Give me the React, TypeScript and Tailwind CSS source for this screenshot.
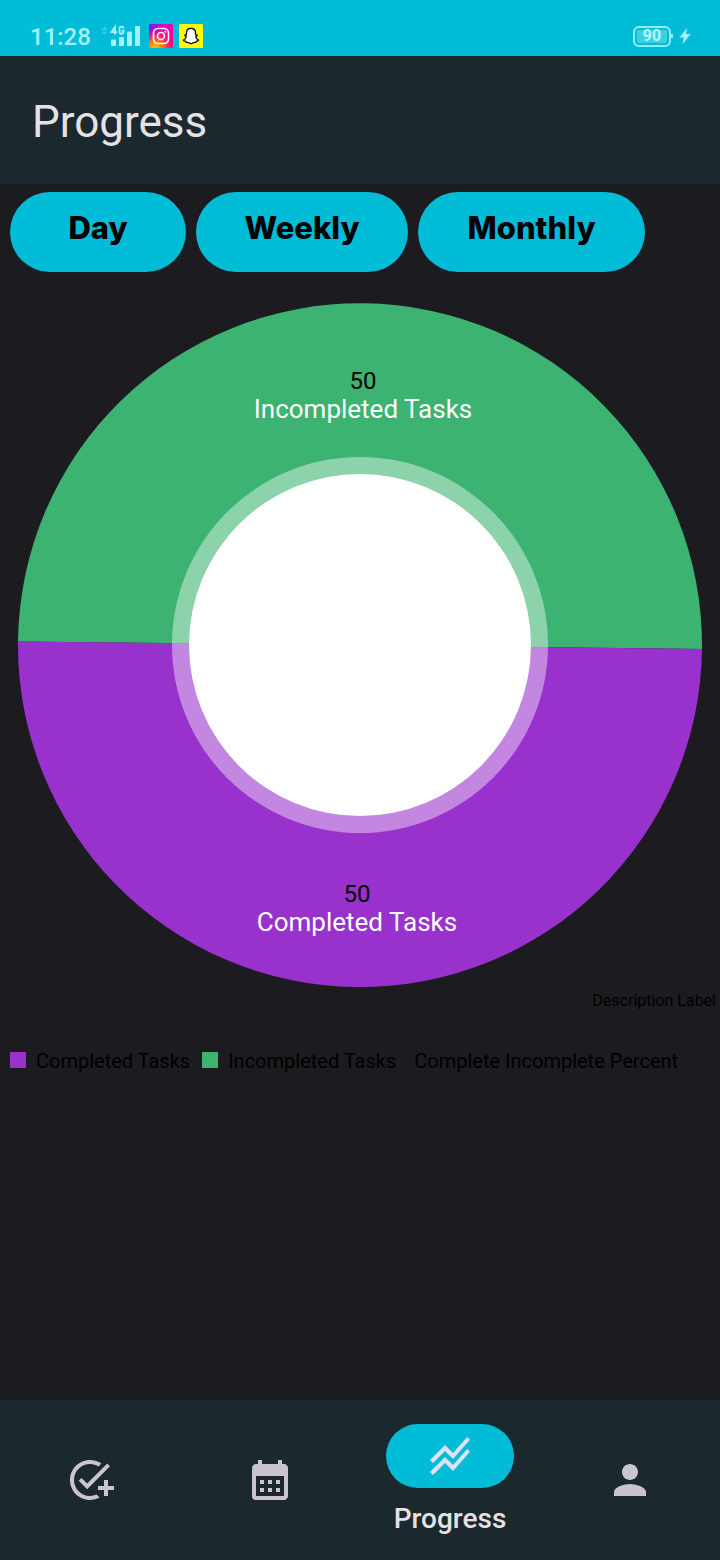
import { MdAddTask, MdCalendarMonth, MdPerson, MdStackedLineChart } from "react-icons/md";

const PURPLE = "#9932cc";
const GREEN = "#3cb371";

function SignalIcon() {
  return (
    <svg className="h-6 w-10" viewBox="0 0 40 24" aria-hidden="true">
      <path d="M0.500 6 3.500 2.500l3 3.500zM0.500 7.500 3.500 11l3-3.500z" fill="#3fcbdf" />
      <g fill="none" stroke="#a5f0fa" strokeWidth="1.9">
        <path d="M14 10.500V3L10.500 8h5.500" />
        <path d="M22.500 4.600a2 2 0 0 0-4 0v3.200a2 2 0 0 0 4 0V6.800h-2" />
      </g>
      <g fill="#a5f0fa">
        <rect x="10" y="15.500" width="5" height="6.500" rx="1" />
        <rect x="18" y="13" width="5" height="9" rx="1" />
        <rect x="26" y="7.500" width="5" height="14.500" rx="1" />
        <rect x="34" y="2" width="5" height="20" rx="1" />
      </g>
    </svg>
  );
}

function InstagramIcon() {
  return (
    <svg className="size-6" viewBox="0 0 24 24" role="img" aria-label="Instagram">
      <defs>
        <linearGradient id="ig-base" x1="0" y1="0" x2="1" y2="0.6">
          <stop offset="0" stopColor="#6a1cff" />
          <stop offset="0.5" stopColor="#e400c8" />
          <stop offset="1" stopColor="#ff0090" />
        </linearGradient>
        <radialGradient id="ig-glow" cx="0.25" cy="1.05" r="0.85">
          <stop offset="0" stopColor="#ffd000" />
          <stop offset="0.45" stopColor="#ff6a1a" />
          <stop offset="1" stopColor="#ff0080" stopOpacity="0" />
        </radialGradient>
      </defs>
      <rect width="24" height="24" rx="1.500" fill="url(#ig-base)" />
      <rect width="24" height="24" rx="1.500" fill="url(#ig-glow)" />
      <g fill="none" stroke="#fff" strokeWidth="1.600">
        <rect x="4.500" y="4.500" width="15" height="15" rx="4.500" />
        <circle cx="12" cy="12" r="3.500" />
      </g>
      <circle cx="16.300" cy="7.700" r="1" fill="#fff" />
    </svg>
  );
}

function SnapchatIcon() {
  return (
    <svg className="size-6" viewBox="0 0 24 24" role="img" aria-label="Snapchat">
      <rect width="24" height="24" rx="1.500" fill="#fffc00" />
      <path
        d="M12 4.300c-2.700 0-4.500 1.900-4.500 4.400v2c-.6.300-1.500-.2-1.700.5-.2.800 1.200 1 1.500 1.700-.5 1.700-1.600 2.700-2.900 3.100.2 1 1.600 1.100 2.300 1.300l.4 1.100c.8.100 1.700-.2 2.500.3.700.5 1.300 1 2.400 1s1.700-.5 2.400-1c.8-.5 1.700-.2 2.500-.3l.4-1.100c.7-.2 2.100-.3 2.300-1.300-1.300-.4-2.400-1.400-2.900-3.100.3-.7 1.700-.9 1.500-1.700-.2-.7-1.100-.2-1.700-.5v-2c0-2.500-1.800-4.400-4.500-4.400z"
        fill="#fff"
        stroke="#000"
        strokeWidth="1.300"
        strokeLinejoin="round"
      />
    </svg>
  );
}

function StatusBar() {
  return (
    <div className="flex h-14 items-end justify-between bg-[#00bcd7] pt-6 pr-[27px] pb-2 pl-[30px]">
      <div className="flex h-6 items-center">
        <span className="pt-0.5 text-2xl leading-6 font-medium text-[#a5f0fa]">11:28</span>
        <div className="ml-2.5 flex items-center gap-2">
          <SignalIcon />
          <div className="flex gap-1.5">
            <InstagramIcon />
            <SnapchatIcon />
          </div>
        </div>
      </div>
      <div className="flex h-6 items-center gap-1">
        <div className="flex items-center">
          <div className="flex h-[21px] w-[38px] rounded-md border-2 border-[#8ceefa] p-0.5">
            <span className="flex flex-1 items-center justify-center rounded-xs bg-[#3fcfe2] text-base leading-4 font-bold text-[#b5f6fd]">
              90
            </span>
          </div>
          <span className="h-1 w-0.5 bg-[#8ceefa]" />
        </div>
        <svg className="h-[18px] w-4" viewBox="0 0 16 18" role="img" aria-label="Charging">
          <path d="M10 1 2.500 10.500h4.300L5.500 17.500l8-10.500H9z" fill="#a5f0fa" />
        </svg>
      </div>
    </div>
  );
}

function PieChart() {
  return (
    <svg className="mt-[13px] block w-full" viewBox="0 0 720 720" role="img" aria-label="Completed and incompleted tasks">
      <path d="M18 356.400A342 342 0 0 1 702 364L360 360z" fill={GREEN} />
      <path d="M702 364A342 342 0 0 1 18 356.400L360 360z" fill={PURPLE} />
      <circle cx="360" cy="360" r="188" fill="#fff" fillOpacity="0.41" />
      <circle cx="360" cy="360" r="171" fill="#fff" />
      <g textAnchor="middle">
        <text x="363" y="104" fontSize="24" fill="#000">50</text>
        <text x="363" y="133" fontSize="26" fill="#fff">Incompleted Tasks</text>
        <text x="357" y="617" fontSize="24" fill="#000">50</text>
        <text x="357" y="646" fontSize="26" fill="#fff">Completed Tasks</text>
      </g>
    </svg>
  );
}

const tab = "h-20 rounded-full bg-[#00bcd7] pb-2 text-[31px] font-extrabold text-black";

const navItems = [
  { label: "Add task", Icon: MdAddTask },
  { label: "Calendar", Icon: MdCalendarMonth },
  { label: "Progress", Icon: MdStackedLineChart },
  { label: "Profile", Icon: MdPerson },
];

export default function App() {
  return (
    <div className="flex min-h-screen flex-col bg-[#1c1b1f] font-['Roboto',sans-serif]">
      <StatusBar />
      <header className="flex h-32 items-center bg-[#1b282d] px-8 pt-1">
        <h1 className="text-[44px] leading-none text-[#e6e1e5]">Progress</h1>
      </header>
      <main className="flex flex-1 flex-col">
        <div className="flex gap-2.5 px-2.5 pt-2 font-['Inter',sans-serif]">
          <button type="button" className={`${tab} w-44`}>Day</button>
          <button type="button" className={`${tab} w-[212px]`}>Weekly</button>
          <button type="button" className={`${tab} w-[227px]`}>Monthly</button>
        </div>
        <PieChart />
        <p className="-mt-3.5 pr-1 text-right text-base leading-5 text-black">Description Label</p>
        <ul className="mt-9 flex items-center gap-3 px-2.5 text-xl leading-7 text-black">
          <li className="flex items-center gap-2.5">
            <span className="mb-0.5 size-4 bg-[#9932cc]" />
            Completed Tasks
          </li>
          <li className="flex items-center gap-2.5">
            <span className="mb-0.5 size-4 bg-[#3cb371]" />
            Incompleted Tasks
          </li>
          <li className="pl-1.5">Complete Incomplete Percent</li>
        </ul>
      </main>
      <nav className="grid h-40 grid-cols-4 bg-[#1b282d]">
        {navItems.map(({ label, Icon }) =>
          label === "Progress" ? (
            <a key={label} href="#progress" aria-current="page" className="flex flex-col items-center pt-6">
              <span className="flex h-16 w-32 items-center justify-center rounded-full bg-[#00bcd7]">
                <Icon className="size-12 text-[#e0e0ff]" />
              </span>
              <span className="mt-[15px] text-[28px] leading-8 font-medium text-[#e6e1e5]">{label}</span>
            </a>
          ) : (
            <a key={label} href="#" aria-label={label} className="flex items-center justify-center">
              <Icon className="size-12 text-[#cac4d0]" />
            </a>
          ),
        )}
      </nav>
    </div>
  );
}
